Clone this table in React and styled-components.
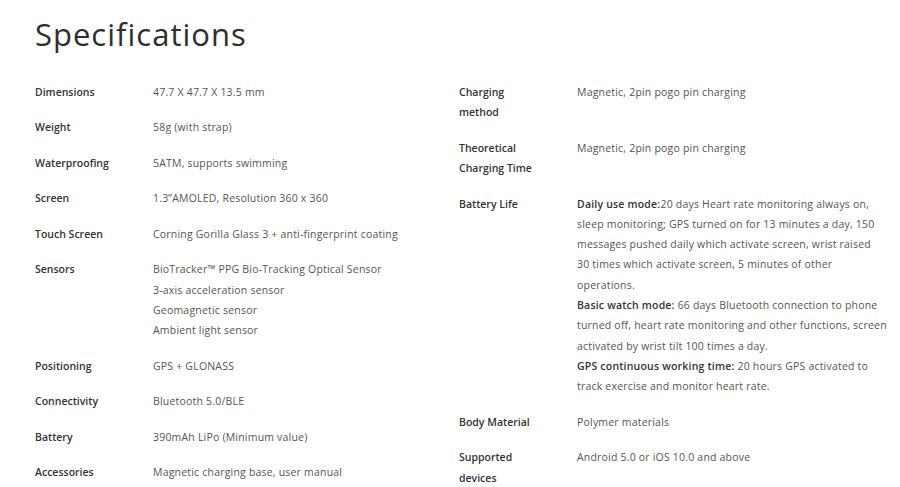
import React from "react";
import styled, { createGlobalStyle } from "styled-components";

const GlobalStyle = createGlobalStyle`
  body {
    margin: 0;
    background: #ffffff;
    font-family: "Open Sans", "Liberation Sans", Arial, sans-serif;
  }
`;

const Page = styled.div`
  width: 900px;
  height: 487px;
  overflow: hidden;
  padding: 14px 35px 0;
  box-sizing: border-box;
`;

const Title = styled.h1`
  margin: 0 0 28px;
  font-size: 31px;
  line-height: 40px;
  font-weight: 500;
  color: #2e2e2e;
  letter-spacing: 1px;
`;

const Columns = styled.div`
  display: grid;
  grid-template-columns: 424px 424px;
`;

const Column = styled.div`
  display: flex;
  flex-direction: column;
`;

const Row = styled.div`
  display: flex;
  padding-bottom: 15.2px;
  font-size: 10.5px;
  line-height: 20.3px;
`;

const Label = styled.div`
  flex: 0 0 118px;
  box-sizing: border-box;
  padding-right: 36px;
  font-weight: 600;
  color: #333333;
`;

const Value = styled.div`
  flex: 1;
  color: #555555;
  white-space: nowrap;
  letter-spacing: 0.2px;
`;

const Strong = styled.b`
  font-weight: 600;
  color: #333333;
`;

const left = [
  ["Dimensions", ["47.7 X 47.7 X 13.5 mm"]],
  ["Weight", ["58g (with strap)"]],
  ["Waterproofing", ["5ATM, supports swimming"]],
  ["Screen", ["1.3\u201dAMOLED, Resolution 360 x 360"]],
  ["Touch Screen", ["Corning Gorilla Glass 3 + anti-fingerprint coating"]],
  [
    "Sensors",
    [
      "BioTracker\u2122  PPG Bio-Tracking Optical Sensor",
      "3-axis acceleration sensor",
      "Geomagnetic sensor",
      "Ambient light sensor",
    ],
  ],
  ["Positioning", ["GPS + GLONASS"]],
  ["Connectivity", ["Bluetooth 5.0/BLE"]],
  ["Battery", ["390mAh LiPo (Minimum value)"]],
  ["Accessories", ["Magnetic charging base, user manual"]],
];

const right = [
  ["Charging method", ["Magnetic, 2pin pogo pin charging"]],
  ["Theoretical Charging Time", ["Magnetic, 2pin pogo pin charging"]],
  ["Battery Life", null],
  ["Body Material", ["Polymer materials"]],
  ["Supported devices", ["Android 5.0 or iOS 10.0 and above"]],
];

const batteryLife = [
  [
    "Daily use mode:",
    [
      "20 days Heart rate monitoring always on,",
      "sleep monitoring; GPS turned on for 13 minutes a day, 150",
      "messages pushed daily which activate screen, wrist raised",
      "30 times which activate screen, 5 minutes of other",
      "operations.",
    ],
  ],
  [
    "Basic watch mode:",
    [
      " 66 days Bluetooth connection to phone",
      "turned off, heart rate monitoring and other functions, screen",
      "activated by wrist tilt 100 times a day.",
    ],
  ],
  [
    "GPS continuous working time:",
    [" 20 hours GPS activated to", "track exercise and monitor heart rate."],
  ],
];

const Lines = ({ lines }) =>
  lines.map((line, i) => (
    <React.Fragment key={i}>
      {i > 0 && <br />}
      {line}
    </React.Fragment>
  ));

const BatteryLife = () =>
  batteryLife.map(([head, lines], i) => (
    <React.Fragment key={head}>
      {i > 0 && <br />}
      <Strong>{head}</Strong>
      <Lines lines={lines} />
    </React.Fragment>
  ));

const SpecColumn = ({ rows }) => (
  <Column>
    {rows.map(([label, lines]) => (
      <Row key={label}>
        <Label>{label}</Label>
        <Value>{lines ? <Lines lines={lines} /> : <BatteryLife />}</Value>
      </Row>
    ))}
  </Column>
);

const App = () => {
  return (
    <Page>
      <GlobalStyle />
      <Title>Specifications</Title>
      <Columns>
        <SpecColumn rows={left} />
        <SpecColumn rows={right} />
      </Columns>
    </Page>
  );
};

export default App;
